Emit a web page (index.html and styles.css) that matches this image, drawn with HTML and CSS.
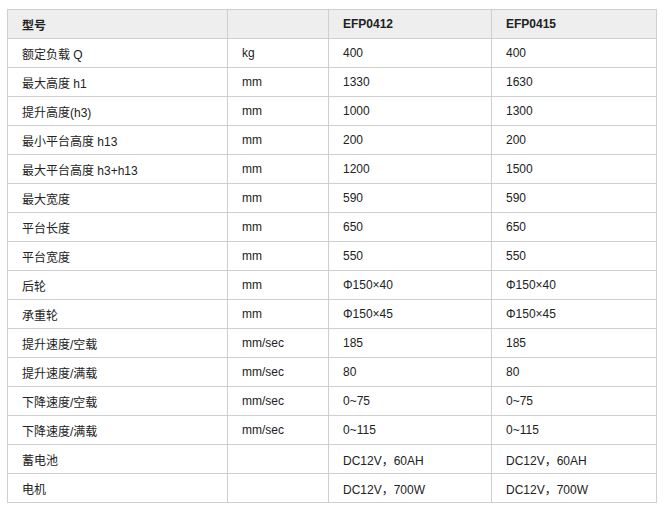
FILE: index.html
```html
<!DOCTYPE html>
<html>
<head>
<meta charset="utf-8">
<link rel="stylesheet" href="styles.css">
</head>
<body>
<table class="spec">
<colgroup><col class="c1"><col class="c2"><col class="c3"><col class="c4"></colgroup>
<thead>
<tr class="head"><th>型号</th><th></th><th>EFP0412</th><th>EFP0415</th></tr>
</thead>
<tbody>
<tr><td>额定负载 Q</td><td>kg</td><td>400</td><td>400</td></tr>
<tr><td>最大高度 h1</td><td>mm</td><td>1330</td><td>1630</td></tr>
<tr><td>提升高度(h3)</td><td>mm</td><td>1000</td><td>1300</td></tr>
<tr><td>最小平台高度 h13</td><td>mm</td><td>200</td><td>200</td></tr>
<tr><td>最大平台高度 h3+h13</td><td>mm</td><td>1200</td><td>1500</td></tr>
<tr><td>最大宽度</td><td>mm</td><td>590</td><td>590</td></tr>
<tr><td>平台长度</td><td>mm</td><td>650</td><td>650</td></tr>
<tr><td>平台宽度</td><td>mm</td><td>550</td><td>550</td></tr>
<tr><td>后轮</td><td>mm</td><td>Φ150×40</td><td>Φ150×40</td></tr>
<tr><td>承重轮</td><td>mm</td><td>Φ150×45</td><td>Φ150×45</td></tr>
<tr><td>提升速度/空载</td><td>mm/sec</td><td>185</td><td>185</td></tr>
<tr><td>提升速度/满载</td><td>mm/sec</td><td>80</td><td>80</td></tr>
<tr><td>下降速度/空载</td><td>mm/sec</td><td>0~75</td><td>0~75</td></tr>
<tr><td>下降速度/满载</td><td>mm/sec</td><td>0~115</td><td>0~115</td></tr>
<tr><td>蓄电池</td><td></td><td>DC12V，60AH</td><td>DC12V，60AH</td></tr>
<tr><td>电机</td><td></td><td>DC12V，700W</td><td>DC12V，700W</td></tr>
</tbody>
</table>
</body>
</html>
```
FILE: styles.css
```css
html, body {
  margin: 0;
  background: #fff;
}
body {
  padding: 9px 0 0 7px;
  font-family: "Liberation Sans", Arial, "Noto Sans CJK SC", sans-serif;
  font-size: 12px;
  color: #222;
}
.spec {
  border-collapse: collapse;
  table-layout: fixed;
  width: 649px;
}
.c1 { width: 220px; }
.c2 { width: 101px; }
.c3 { width: 163px; }
.c4 { width: 165px; }
.spec th, .spec td {
  border: 1px solid #cfcfcf;
  height: 28px;
  padding: 0 0 0 14px;
  text-align: left;
  vertical-align: middle;
  white-space: nowrap;
  box-sizing: border-box;
}
.spec td { height: 29px; }
.spec th {
  height: 29px;
  background: #eeeeee;
  font-weight: bold;
  color: #222;
}
```
